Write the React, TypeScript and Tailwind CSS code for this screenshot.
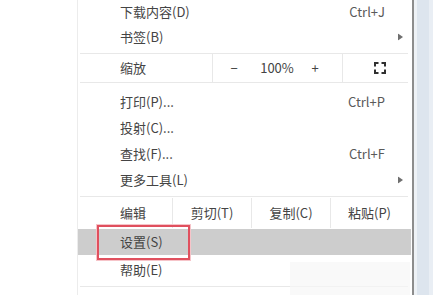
import React from "react";

type Item = { label: string; shortcut?: string; submenu?: boolean };

const font = "font-['Microsoft_YaHei','Noto_Sans_CJK_SC',sans-serif]";

function Arrow() {
  return (
    <svg width="5" height="7" viewBox="0 0 5 7" className="absolute right-[9px] top-1/2 -translate-y-1/2">
      <path d="M0 0 L5 3.5 L0 7 Z" fill="#6f6f6f" />
    </svg>
  );
}

function Row({ item, h = "h-[26px]" }: { item: Item; h?: string }) {
  return (
    <div className={`relative flex items-center pl-[42px] pr-[27px] ${h}`}>
      <span className="flex-1">{item.label}</span>
      {item.shortcut && <span className="text-[#5a5a5a]">{item.shortcut}</span>}
      {item.submenu && <Arrow />}
    </div>
  );
}

function Sep() {
  return <div className="h-px bg-[#e8e8e8] ml-[2px] mr-[4px]" />;
}

function FullscreenIcon() {
  return (
    <svg width="12" height="12" viewBox="0 0 12 12" fill="none" stroke="#2f2f2f" strokeWidth="2">
      <path d="M1 4.5 V1 H4.5" />
      <path d="M7.5 1 H11 V4.5" />
      <path d="M11 7.5 V11 H7.5" />
      <path d="M4.5 11 H1 V7.5" />
    </svg>
  );
}

export default function App() {
  return (
    <div className={`w-[433px] h-[295px] overflow-hidden bg-white flex text-[13px] text-[#444] ${font}`}>
      <div className="w-[77px] shrink-0" />
      <div className="w-px shrink-0 bg-[#ececec]" />
      <div className="w-[334px] shrink-0 relative flex flex-col">
        <Row item={{ label: "下载内容(D)", shortcut: "Ctrl+J" }} h="h-[24px]" />
        <Row item={{ label: "书签(B)", submenu: true }} />
        <div className="h-px mt-[2px]" />
        <Sep />
        {/* zoom row */}
        <div className="flex h-[28px] items-stretch">
          <div className="w-[134px] pl-[42px] flex items-center">缩放</div>
          <div className="w-px bg-[#e8e8e8]" />
          <div className="w-[129px] flex items-center">
            <span className="w-[42px] text-center">−</span>
            <span className="w-[44px] text-center">100%</span>
            <span className="w-[32px] text-center">+</span>
          </div>
          <div className="w-px bg-[#e8e8e8]" />
          <div className="flex-1 flex items-center justify-center pl-[8px] pr-[4px]">
            <FullscreenIcon />
          </div>
        </div>
        <Sep />
        <div className="pt-[6px] pb-[3px]">
          <Row item={{ label: "打印(P)...", shortcut: "Ctrl+P" }} />
          <Row item={{ label: "投射(C)..." }} />
          <Row item={{ label: "查找(F)...", shortcut: "Ctrl+F" }} />
          <Row item={{ label: "更多工具(L)", submenu: true }} />
        </div>
        <Sep />
        {/* edit row */}
        <div className="flex h-[32px] items-stretch">
          <div className="w-[94px] pl-[42px] flex items-center">编辑</div>
          <div className="w-px bg-[#e8e8e8] my-[1px]" />
          <div className="w-[78px] flex items-center justify-center">剪切(T)</div>
          <div className="w-px bg-[#e8e8e8] my-[1px]" />
          <div className="w-[78px] flex items-center justify-center">复制(C)</div>
          <div className="w-px bg-[#e8e8e8] my-[1px]" />
          <div className="w-[77px] flex items-center justify-center">粘贴(P)</div>
        </div>
        <div className="bg-[#cdcdcd] mr-[1px]">
          <Row item={{ label: "设置(S)" }} />
        </div>
        <div className="pt-[2px] pb-[3px]">
          <Row item={{ label: "帮助(E)" }} />
        </div>
        <Sep />
        <div className="absolute left-[212px] top-[262px] w-[120px] h-[33px] bg-[#f7f7f7] opacity-70" />
        {/* red highlight box */}
        <div className="absolute left-[19px] top-[225px] w-[93px] h-[35px] border-2 border-[#e0505e] shadow-[0_0_0_1px_#f6c4c9]" />
      </div>
      <div className="w-[2px] shrink-0 bg-[#8d8d8d]" />
      <div className="flex-1 flex">
        <div className="w-[3px] bg-[#eef2f6]" />
        <div className="flex-1 bg-[#dde5ee]" />
        <div className="w-[4px] bg-[#e9eef4]" />
      </div>
    </div>
  );
}
